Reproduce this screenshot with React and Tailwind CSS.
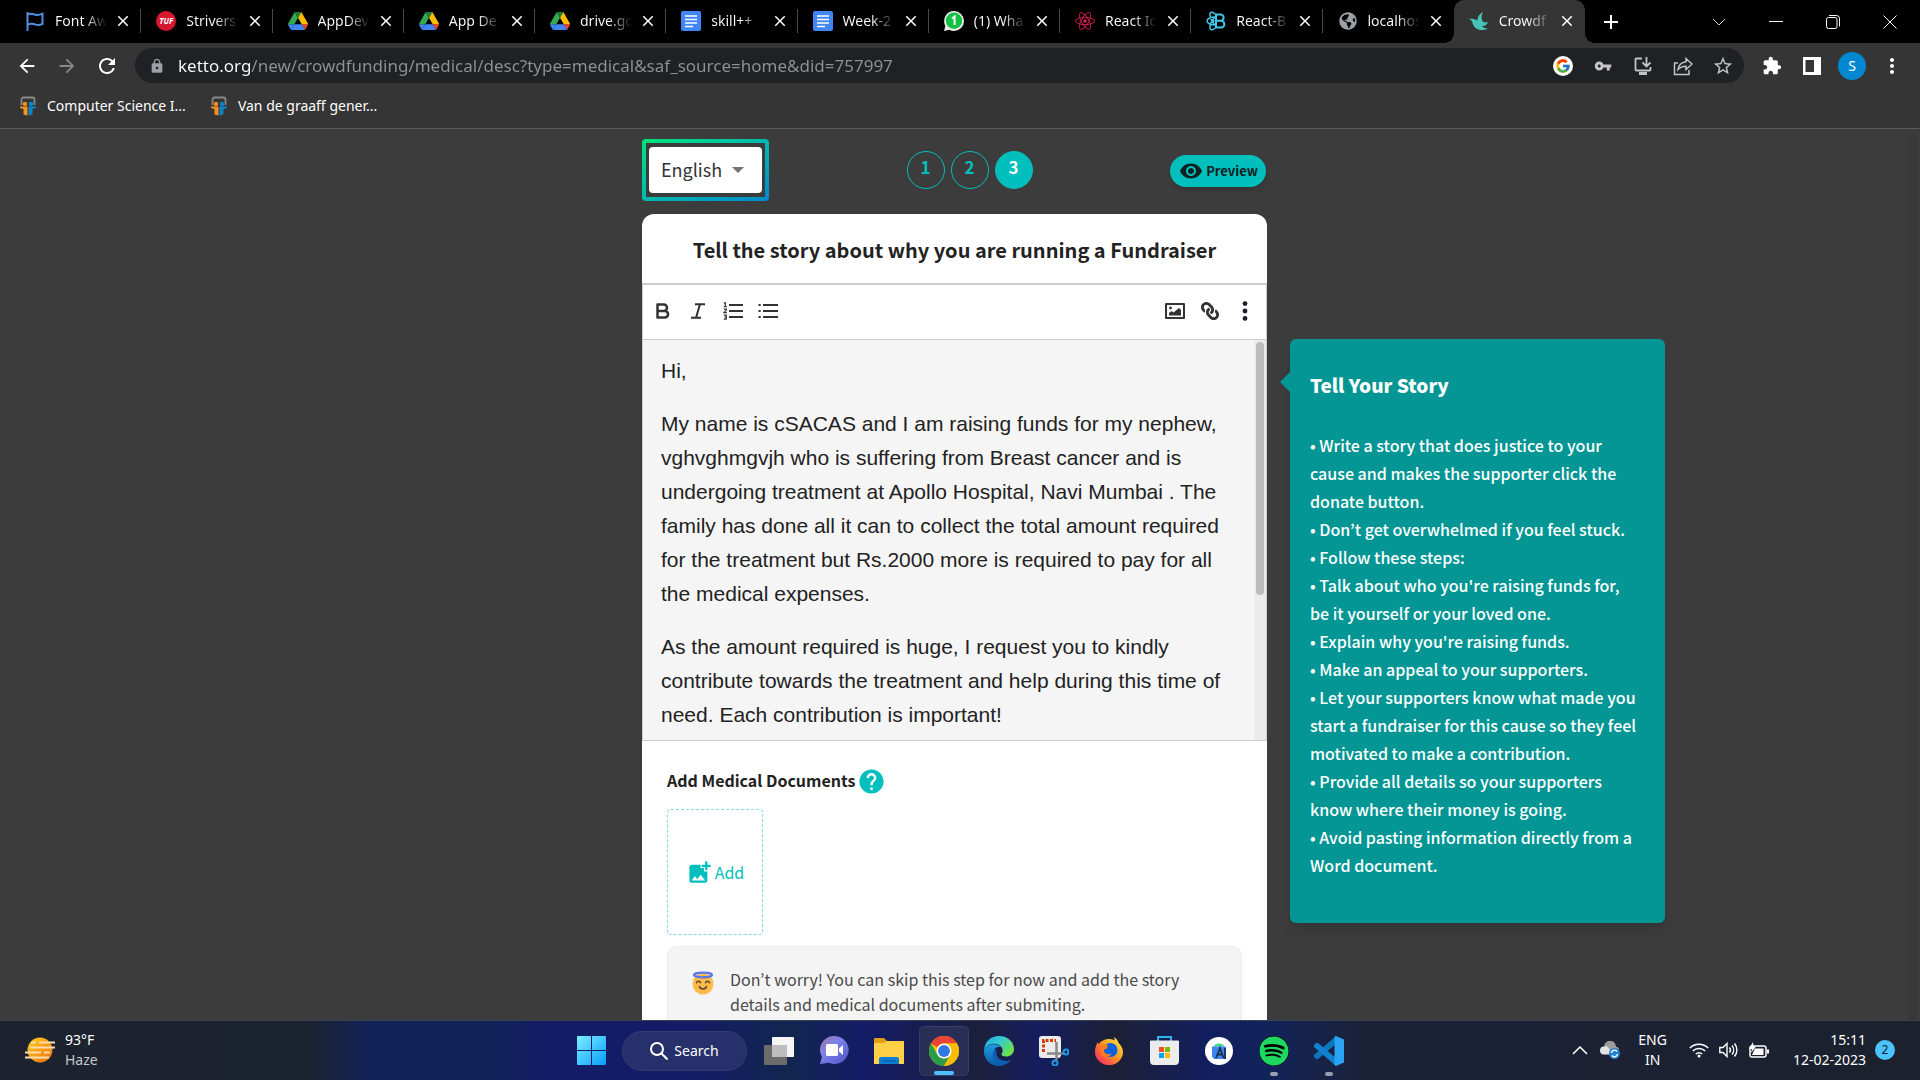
import React from "react";
import {
  MdArrowBack, MdArrowForward, MdRefresh, MdLock, MdVpnKey, MdStarBorder, MdExtension,
  MdMoreVert, MdClose, MdAdd, MdHelp, MdAddPhotoAlternate, MdVisibility,
} from "react-icons/md";
import { FcGoogle } from "react-icons/fc";
import { FaReact, FaSpotify, FaLink, FaGlobeAmericas } from "react-icons/fa";

const ui = "font-['Noto_Sans','Open_Sans',sans-serif]";
const site = "font-['Noto_Sans_CJK_KR','Noto_Sans',sans-serif]";

/* ---------- favicons ---------- */

const FlagIcon = () => (
  <svg viewBox="0 0 20 20" className="size-5" fill="none" stroke="#4f8fe0" strokeWidth="2">
    <path d="M2.500 1v19" />
    <path d="M2.500 3.500c3-1.300 5-.8 7 0s4.500.8 8-.8V13c-3 1.300-5.500 1.300-7.500.4s-4.500-1-7.500.3" />
  </svg>
);
const TufIcon = () => (
  <span className="flex size-5 items-center justify-center rounded-full bg-[#d5182f] text-[8px] font-bold italic text-white">TUF</span>
);
const DriveIcon = () => (
  <svg viewBox="0 0 87 78" className="h-[18px] w-5">
    <path d="m6.600 66.850 3.850 6.650c.8 1.400 1.950 2.500 3.300 3.300l13.750-23.800h-27.500c0 1.550.4 3.100 1.200 4.500z" fill="#4285f4" />
    <path d="m43.650 25-13.750-23.800c-1.350.8-2.500 1.900-3.300 3.300l-25.400 44a9 9 0 0 0-1.200 4.500h27.500z" fill="#34a853" />
    <path d="m73.550 76.800c1.350-.8 2.500-1.900 3.300-3.300l1.600-2.750 7.650-13.250c.8-1.400 1.200-2.950 1.200-4.500h-27.500l5.850 11.500z" fill="#ea4335" />
    <path d="m43.650 25 13.750-23.800c-1.350-.8-2.900-1.200-4.500-1.200h-18.500c-1.600 0-3.150.45-4.500 1.200z" fill="#188038" />
    <path d="m59.800 53h-32.300l-13.750 23.800c1.350.8 2.900 1.200 4.500 1.200h50.800c1.600 0 3.150-.45 4.500-1.200z" fill="#4285f4" />
    <path d="m73.400 26.500-12.700-22c-.8-1.400-1.950-2.500-3.300-3.300l-13.750 23.800 16.150 28h27.450c0-1.550-.4-3.100-1.200-4.500z" fill="#fbbc04" />
  </svg>
);
const DocsIcon = () => (
  <svg viewBox="0 0 20 20" className="size-5">
    <rect width="20" height="20" rx="2" fill="#4285f4" />
    <path d="M4 5h12M4 8.500h12M4 12h12M4 15.500h8" stroke="#fff" strokeWidth="1.700" />
  </svg>
);
const WhatsIcon = () => (
  <svg viewBox="0 0 20 20" className="size-5">
    <path d="M10 0a10 10 0 0 1 0 20 10 10 0 0 1-4.600-1.200L0 20l1.400-5.100A10 10 0 0 1 10 0z" fill="#eee" />
    <circle cx="10" cy="9.800" r="8.200" fill="#12c143" />
    <path d="M8 7.500 10.600 5.500V14" fill="none" stroke="#fff" strokeWidth="2" />
  </svg>
);
const GlobeIcon = () => <FaGlobeAmericas className="size-[18px] text-[#9aa0a6]" />;
const BirdIcon = () => (
  <svg viewBox="0 0 20 20" className="size-5" fill="#45c4b5">
    <path d="M14 1C9 4 8.500 7 8.600 9.500 5 7.800 3 7.600 0 8c2.500 1 3 2 3.600 4 .9 4 4.400 7 8.400 7 3 0 5-.6 7-1.600-3 .2-5-.6-6-2.400 3 .3 5-1.500 6.300-4-2.300.6-4 .5-5.300-.2C12 8 12.200 4 14 1z" />
  </svg>
);
const ReactBootstrapIcon = () => (
  <svg viewBox="0 0 20 20" className="size-5" fill="none" stroke="#41c7e8" strokeWidth="1.500">
    <path d="M10 3.500h4.500a3 3 0 0 1 0 6.300h-4.500zM10 9.800h5a3.300 3.300 0 0 1 0 6.700h-5z" strokeWidth="2" />
    <path d="M9 6C4 6 1 8 1 10s3 4 8 4M9 3C6 0 3.500 1 4 4.500S7 12 9 14M9 17c-3 3-5.500 2-5-1.500S7 8 9 6" />
    <circle cx="7" cy="10" r="1.500" fill="#41c7e8" stroke="none" />
  </svg>
);

const tabs = [
  { t: "Font Aw", i: <FlagIcon /> },
  { t: "Strivers", i: <TufIcon /> },
  { t: "AppDev", i: <DriveIcon /> },
  { t: "App De", i: <DriveIcon /> },
  { t: "drive.go", i: <DriveIcon /> },
  { t: "skill++", i: <DocsIcon /> },
  { t: "Week-2", i: <DocsIcon /> },
  { t: "(1) Wha", i: <WhatsIcon /> },
  { t: "React Ic", i: <FaReact className="size-5 text-[#d81b52]" /> },
  { t: "React-B", i: <ReactBootstrapIcon /> },
  { t: "localhos", i: <GlobeIcon /> },
  { t: "Crowdf", i: <BirdIcon />, active: true },
];

function Tab({ tab, divider }) {
  return (
    <div
      className={
        "relative flex h-full min-w-0 flex-1 items-center pl-[15px] pr-2 pb-px " +
        (tab.active ? "rounded-t-[10px] bg-[#353535]" : "")
      }
    >
      {tab.active && (
        <>
          <span className="absolute bottom-0 -left-2.5 size-2.5 bg-[radial-gradient(circle_at_0_0,transparent_10px,#353535_10px)]" />
          <span className="absolute bottom-0 -right-2.5 size-2.5 bg-[radial-gradient(circle_at_100%_0,transparent_10px,#353535_10px)]" />
        </>
      )}
      <button className="flex min-w-0 flex-1 items-center gap-2.5">
        <span className="flex w-5 shrink-0 justify-center">{tab.i}</span>
        <span className="min-w-0 flex-1 whitespace-nowrap bg-linear-to-r from-white from-55% to-transparent bg-clip-text text-left text-sm text-transparent">
          {tab.t}
        </span>
      </button>
      <button aria-label={"Close " + tab.t} className="ml-1.5 flex size-5 items-center justify-center text-white">
        <MdClose className="size-[18px]" />
      </button>
      {divider && <span className="absolute right-0 h-6 w-px bg-[#4a4a4a]" />}
    </div>
  );
}

function TabStrip() {
  return (
    <div className="flex h-[43px] shrink-0 items-center bg-black pl-2.5 text-white">
      <div className="flex h-full max-w-[1575px] flex-1">
        {tabs.map((t, i) => (
          <Tab key={i} tab={t} divider={i < 10} />
        ))}
      </div>
      <button aria-label="New tab" className="ml-3 flex size-7 items-center justify-center">
        <MdAdd className="size-6" />
      </button>
      <div className="ml-auto flex h-9 pr-0.5">
        <button aria-label="Search tabs" className="flex w-[57px] items-center justify-center">
          <svg viewBox="0 0 14 14" className="size-3.5" fill="none" stroke="#ccc"><path d="m1 4 6 6 6-6" /></svg>
        </button>
        <button aria-label="Minimize" className="flex w-[57px] items-center justify-center">
          <span className="h-px w-3.5 bg-white" />
        </button>
        <button aria-label="Restore" className="flex w-[57px] items-center justify-center">
          <svg viewBox="0 0 14 14" className="size-3.5" fill="none" stroke="#fff">
            <rect x=".5" y="2.500" width="10.500" height="11" rx="2" /><path d="M3 .5h7.500a3 3 0 0 1 3 3v8" />
          </svg>
        </button>
        <button aria-label="Close window" className="flex w-[57px] items-center justify-center">
          <svg viewBox="0 0 14 14" className="size-3.5" stroke="#fff"><path d="m.5.5 13 13M13.500.5l-13 13" /></svg>
        </button>
      </div>
    </div>
  );
}

const iconBtn = "flex h-8 w-10 shrink-0 items-center justify-center";

function Toolbar() {
  return (
    <div className="flex h-[45px] items-center pl-[7px] pr-2 text-white">
      <button aria-label="Back" className={iconBtn}><MdArrowBack className="size-[22px]" /></button>
      <button aria-label="Forward" className={iconBtn}><MdArrowForward className="size-[22px] text-[#868686]" /></button>
      <button aria-label="Reload" className={iconBtn}><MdRefresh className="size-6" /></button>
      <div className="ml-2 flex h-[35px] flex-1 items-center rounded-full bg-[#202124] pr-px text-[#c4c4c4]">
        <span className="flex w-[43px] justify-center"><MdLock className="size-4 text-[#9aa0a6]" /></span>
        <input
          aria-label="Address"
          defaultValue="ketto.org/new/crowdfunding/medical/desc?type=medical&saf_source=home&did=757997"
          className="min-w-0 flex-1 bg-[linear-gradient(90deg,#fff_73px,#8f9195_73px)] bg-clip-text text-[17px] text-transparent outline-none"
        />
        <button aria-label="Google" className={iconBtn}>
          <span className="flex size-5 items-center justify-center rounded-full bg-white"><FcGoogle className="size-4" /></span>
        </button>
        <button aria-label="Passwords" className={iconBtn}><MdVpnKey className="size-[18px]" /></button>
        <button aria-label="Install app" className={iconBtn}>
          <svg viewBox="0 0 20 20" className="size-5" fill="none" stroke="currentColor" strokeWidth="1.800">
            <path d="M9 2.500H3.500a1 1 0 0 0-1 1v10a1 1 0 0 0 1 1h13a1 1 0 0 0 1-1V11M13.500 1v9M9.500 6.500l4 4 4-4" /><path d="M6 17.500h8" strokeWidth="3" />
          </svg>
        </button>
        <button aria-label="Share" className={iconBtn}>
          <svg viewBox="0 0 20 20" className="size-5" fill="none" stroke="currentColor" strokeWidth="1.500">
            <path d="M5 7H1.500v11.500H16V14" /><path d="M13 2.500 19 8l-6 5.500v-3.300c-3.500 0-6 1-8 3.300.5-4.500 3.500-7.200 8-7.800z" />
          </svg>
        </button>
        <button aria-label="Bookmark" className={iconBtn}><MdStarBorder className="size-[22px]" /></button>
      </div>
      <div className="ml-2 flex">
        <button aria-label="Extensions" className={iconBtn}><MdExtension className="size-5" /></button>
        <button aria-label="Side panel" className={iconBtn}>
          <svg viewBox="0 0 18 18" className="size-[18px]"><path fill="#fff" fillRule="evenodd" d="M0 0h18v18H0zM2.500 3v12H11V3z" /></svg>
        </button>
        <button aria-label="Profile" className={iconBtn}>
          <span className="flex size-7 items-center justify-center rounded-full bg-[#0288d1] text-sm">S</span>
        </button>
        <button aria-label="Menu" className={iconBtn}><MdMoreVert className="size-6" /></button>
      </div>
    </div>
  );
}

const SlideIcon = () => (
  <svg viewBox="0 0 18 20" className="h-5 w-[18px] shrink-0">
    <path d="M2.500 9V3.500a2 2 0 0 1 2-2h9a2 2 0 0 1 2 2V9" fill="none" stroke="#8a8a8a" strokeWidth="1.800" />
    <circle cx="6" cy="8" r="2.300" fill="#f28b1d" /><circle cx="12" cy="8" r="2.300" fill="#0b84c8" />
    <path d="M1 10.500h7.500V19.500l-4-1V13L1 12z" fill="#f5921e" /><path d="M17 10.500H9.500V19.500l4-1V13l3.500-1z" fill="#0b84c8" />
  </svg>
);

function Bookmarks() {
  return (
    <div className="flex h-10 items-center gap-6 pl-[19px] pb-1 text-sm text-white">
      {["Computer Science I...", "Van de graaff gener..."].map((b) => (
        <a key={b} href="#" className="flex items-center gap-2.5"><SlideIcon />{b}</a>
      ))}
    </div>
  );
}

/* ---------- fundraiser page ---------- */

function Steps() {
  const base = "flex size-[38px] items-center justify-center rounded-full border border-[#01bfbd] pb-1.5 text-[17px] font-bold ";
  return (
    <div className="flex gap-1.5">
      <button className={base + "text-[#01bfbd]"}>1</button>
      <button className={base + "text-[#01bfbd]"}>2</button>
      <button className={base + "bg-[#01bfbd] text-white"}>3</button>
    </div>
  );
}

const BoldIcon = () => (
  <svg viewBox="0 0 14 16" className="h-4 w-3.5" fill="none" stroke="#333" strokeWidth="2.500" strokeLinejoin="round">
    <path d="M1.500 1.500h6.300a3.200 3.200 0 0 1 0 6.400H1.500zM1.500 7.900h7.300a3.300 3.300 0 0 1 0 6.600H1.500z" />
  </svg>
);
const ItalicIcon = () => (
  <svg viewBox="0 0 14 16" className="h-4 w-3.5" fill="none" stroke="#333" strokeWidth="2">
    <path d="M4 1.200h10M0 14.800h10M9 1.200 5 14.800" />
  </svg>
);
const OrderedIcon = () => (
  <svg viewBox="0 0 20 18" className="h-[18px] w-5" fill="none" stroke="#333">
    <path d="M6 3h14M6 9h14M6 15h14" strokeWidth="2.200" />
    <path d="M.8 1.200 2.300.6v4M.8 4.600h3M.8 7.200h2.600v.9L.8 10.700h3M.8 13.200h2.500v3.900H.8M1.500 15.100h1.800" strokeWidth="1.200" />
  </svg>
);
const BulletIcon = () => (
  <svg viewBox="0 0 20 18" className="h-[18px] w-5" fill="none" stroke="#333" strokeWidth="2.200">
    <path d="M5 3h15M5 9h15M5 15h15M.5 3h2.200M.5 9h2.200M.5 15h2.200" />
  </svg>
);
const ImageIcon = () => (
  <svg viewBox="0 0 20 16" className="h-4 w-5">
    <path fill="#333" fillRule="evenodd" d="M1 0h18a1 1 0 0 1 1 1v14a1 1 0 0 1-1 1H1a1 1 0 0 1-1-1V1a1 1 0 0 1 1-1zm1 2v12h16V2z" />
    <path fill="#333" d="M4 12.500V10l2.500-2 2 1.500L14 5l2 2v5.500z" /><circle cx="5.500" cy="5" r="1.400" fill="#333" />
  </svg>
);

const tool = "flex h-8 w-[35px] items-center justify-center";

function Editor() {
  return (
    <div className="border-x border-b border-[#ccc]">
      <div className="flex h-[57px] items-center border-t-2 border-b border-[#ccc] pb-[3px] pl-0.5 pr-1">
        <button aria-label="Bold" className={tool}><BoldIcon /></button>
        <button aria-label="Italic" className={tool}><ItalicIcon /></button>
        <button aria-label="Ordered list" className={tool}><OrderedIcon /></button>
        <button aria-label="Bullet list" className={tool}><BulletIcon /></button>
        <span className="flex-1" />
        <button aria-label="Insert image" className={tool}><ImageIcon /></button>
        <button aria-label="Insert link" className={tool}><FaLink className="size-[18px] -scale-x-100 text-[#333]" /></button>
        <button aria-label="More" className={tool}>
          <svg viewBox="0 0 6 20" className="h-5 w-1.5" fill="#1c1c2c"><circle cx="3" cy="2.600" r="2.400" /><circle cx="3" cy="10" r="2.400" /><circle cx="3" cy="17.400" r="2.400" /></svg>
        </button>
      </div>
      <div className="flex h-[400px] bg-[#f5f5f5]">
        <div
          role="textbox" aria-label="Story" aria-multiline="true"
          className="flex flex-1 flex-col gap-[19px] overflow-hidden whitespace-nowrap pl-[18px] pt-3.5 font-['Liberation_Sans',Arial,sans-serif] text-[21px] leading-[34px] text-[#222]"
        >
          <p>Hi,</p>
          <p>
            My name is cSACAS and I am raising funds for my nephew,<br />
            vghvghmgvjh who is suffering from Breast cancer and is<br />
            undergoing treatment at Apollo Hospital, Navi Mumbai . The<br />
            family has done all it can to collect the total amount required<br />
            for the treatment but Rs.2000 more is required to pay for all<br />
            the medical expenses.
          </p>
          <p>
            As the amount required is huge, I request you to kindly<br />
            contribute towards the treatment and help during this time of<br />
            need. Each contribution is important!
          </p>
        </div>
        <div className="flex w-3 justify-center bg-[#ebebeb] pt-0.5">
          <span className="h-[253px] w-2 rounded-full bg-[#bcbcbc]" />
        </div>
      </div>
    </div>
  );
}

const AngelIcon = () => (
  <svg viewBox="0 0 22 24" className="mt-1 h-6 w-[22px] shrink-0">
    <circle cx="11" cy="13" r="10.500" fill="#fdbb4b" />
    <ellipse cx="11" cy="4" rx="9" ry="2.300" fill="none" stroke="#5a76e0" strokeWidth="2.200" />
    <path d="M4.500 11.800c.8-2 3.200-2 4 0M13.500 11.800c.8-2 3.200-2 4 0M7.500 15.500c.6 3.200 6.400 3.200 7 0" fill="none" stroke="#5f4631" strokeWidth="1.500" strokeLinecap="round" />
  </svg>
);

const tips = [
  ["Write a story that does justice to your", "cause and makes the supporter click the", "donate button."],
  ["Don’t get overwhelmed if you feel stuck."],
  ["Follow these steps:"],
  ["Talk about who you're raising funds for,", "be it yourself or your loved one."],
  ["Explain why you're raising funds."],
  ["Make an appeal to your supporters."],
  ["Let your supporters know what made you", "start a fundraiser for this cause so they feel", "motivated to make a contribution."],
  ["Provide all details so your supporters", "know where their money is going."],
  ["Avoid pasting information directly from a", "Word document."],
];

function Fundraiser() {
  return (
    <main className={"grid min-h-0 flex-1 grid-cols-[1fr_625px_1fr_11px] overflow-hidden bg-[#3c3c3c] " + site}>
      <span />
      <div className="flex flex-col pt-2.5">
        <header className="flex items-center justify-between">
          <div className="h-[62px] w-[127px] rounded-[4px] bg-linear-to-br from-[#00e676] to-[#0288d1] p-1">
            <div className="h-full bg-[#3c3c3c] px-[3px] py-1">
              <div className="relative h-full">
                <select aria-label="Language" className="h-full w-full appearance-none rounded-[4px] bg-white pb-0.5 pl-3 text-[18px] text-[#333] outline-none">
                  <option>English</option>
                </select>
                <span className="pointer-events-none absolute top-5 right-[18px] border-x-6 border-t-6 border-x-transparent border-t-[#757575]" />
              </div>
            </div>
          </div>
          <Steps />
          <button className="mt-0.5 mr-px flex h-8 items-center gap-[3px] rounded-full bg-[#01bfbd] px-2 pl-[9px] text-[13px] font-bold text-[#10201f] shadow-md">
            <MdVisibility className="size-6" />Preview
          </button>
        </header>
        <section className="mt-[13px] rounded-t-[12px] bg-white">
          <h1 className="flex h-[69px] items-center justify-center pt-0.5 text-[20px] font-bold text-[#222]">
            Tell the story about why you are running a Fundraiser
          </h1>
          <Editor />
          <div className="flex flex-col px-[25px] pt-[26px]">
            <div className="flex h-7 items-center gap-0.5 text-[16px] font-bold text-[#222]">
              <span className="pb-0.5">Add Medical Documents</span>
              <button aria-label="Help"><MdHelp className="size-[29px] text-[#01bfbd]" /></button>
            </div>
            <button className="mt-3.5 flex h-[126px] w-24 items-center justify-center gap-0.5 rounded-[4px] border border-dashed border-[#7adedc] text-[16px] text-[#01bfbd]">
              <MdAddPhotoAlternate className="size-[27px]" />Add
            </button>
            <div className="mt-[11px] flex h-[140px] gap-4 rounded-[10px] border border-[#ececec] bg-[#f4f4f4] px-6 pt-5 text-[16px] leading-[25px] text-[#4a4a4a]">
              <AngelIcon />
              <p className="whitespace-nowrap">
                Don’t worry! You can skip this step for now and add the story<br />
                details and medical documents after submiting.
              </p>
            </div>
          </div>
        </section>
      </div>
      <aside className="relative mt-[210px] ml-[23px] h-[584px] w-[375px] rounded-[6px] bg-[#049694] px-5 pt-8 text-white shadow-lg">
        <span className="absolute top-[33px] -left-2.5 border-y-10 border-r-10 border-y-transparent border-r-[#049694]" />
        <h2 className="text-[19px] leading-7 font-black">Tell Your Story</h2>
        <ul className="mt-8 text-[16px] leading-7 font-medium whitespace-nowrap">
          {tips.map((lines, i) => (
            <li key={i}>
              {lines.map((l, j) => (
                <span key={j} className="block">{j === 0 ? "• " + l : l}</span>
              ))}
            </li>
          ))}
        </ul>
      </aside>
      <span className="mt-1 w-2 rounded-t-full bg-[#383838]" />
    </main>
  );
}

/* ---------- taskbar ---------- */

const WindowsIcon = () => (
  <svg viewBox="0 0 29 29" className="size-[29px]">
    <defs><linearGradient id="win" x1="0" y1="0" x2="1" y2="1"><stop stopColor="#7af0ff" /><stop offset="1" stopColor="#0a9bff" /></linearGradient></defs>
    <path fill="url(#win)" d="M1 0h13v14H0V1a1 1 0 0 1 1-1zm14 0h13a1 1 0 0 1 1 1v13H15zM0 15h14v14H1a1 1 0 0 1-1-1zm15 0h14v13a1 1 0 0 1-1 1H15z" />
  </svg>
);
const TaskViewIcon = () => (
  <svg viewBox="0 0 30 28" className="h-7 w-[30px]">
    <rect x="8" width="22" height="20" rx="1" fill="#f5f5f5" />
    <rect y="8" width="23" height="20" rx="1" fill="#6b6b6b" />
    <path d="M8 8h15v12H8z" fill="#bdbdbd" />
  </svg>
);
const ChatIcon = () => (
  <svg viewBox="0 0 29 29" className="size-[29px]">
    <defs><linearGradient id="chat" x1="0" y1="0" x2="1" y2="1"><stop stopColor="#a76f9f" /><stop offset=".4" stopColor="#7b83eb" /><stop offset="1" stopColor="#4f52c4" /></linearGradient></defs>
    <path d="M15 0a14 14 0 1 1-6 26.800L0 28l2-7A14 14 0 0 1 15 0z" fill="url(#chat)" />
    <rect x="6" y="8" width="12" height="12" rx="1.500" fill="#fff" /><path d="M19 12.500 23 9v10l-4-3.500z" fill="#fff" />
  </svg>
);
const FolderIcon = () => (
  <svg viewBox="0 0 30 28" className="h-7 w-[30px]">
    <path d="M1 1h9l3 3h16a1 1 0 0 1 1 1v8H0V2a1 1 0 0 1 1-1z" fill="#e29d0b" />
    <path d="M0 6h10l3-2h16a1 1 0 0 1 1 1v22H0z" fill="#ffcf48" />
    <path d="M5 27v-5a2 2 0 0 1 2-2h16a2 2 0 0 1 2 2v5z" fill="#0f7fd6" /><path d="M8 24h14" stroke="#0a4f96" />
  </svg>
);
const ChromeIcon = () => (
  <svg viewBox="0 0 48 48" className="size-[30px]">
    <circle cx="24" cy="24" r="24" fill="#fbbc04" />
    <path d="M3.200 12A24 24 0 0 1 44.800 12H24a12 12 0 0 0-10.400 6z" fill="#ea4335" />
    <path d="M3.200 12A24 24 0 0 0 24 48l10.400-18a12 12 0 0 1-20.800 0z" fill="#2a9d4a" />
    <path d="M44.800 12H24v6l10.400 12L24 48A24 24 0 0 0 44.800 12z" fill="#fbbc04" />
    <circle cx="24" cy="24" r="12" fill="#fff" /><circle cx="24" cy="24" r="9.500" fill="#2f78e6" />
  </svg>
);
const EdgeIcon = () => (
  <svg viewBox="0 0 30 30" className="size-[30px]">
    <defs>
      <linearGradient id="e1" x1="0" y1="0" x2="1" y2=".6"><stop stopColor="#1fa8e8" /><stop offset=".5" stopColor="#35c9d0" /><stop offset="1" stopColor="#6be04a" /></linearGradient>
      <linearGradient id="e2" x1="0" y1="0" x2="0" y2="1"><stop stopColor="#1b9de2" /><stop offset="1" stopColor="#0c59a4" /></linearGradient>
    </defs>
    <path d="M0 15a15 15 0 0 0 15 15c5 0 9-2.500 12-6-7 3-16-1-14.500-9C11 10 2 8 0 15z" fill="#0e5fb0" />
    <path d="M0 14C1 5 7 0 15 0c9 0 15 6 15 13 0 5-4 7.500-8 7.500-3 0-5-1-4.500-2.500 1.500-2 1.500-4 .5-6C15 6 4 6 0 14z" fill="url(#e1)" />
    <path d="M0 14c3-6 12-8 17-3-5-1-8 3-8 7 0 6 4 10 9 11.700C8 31.500-.5 24 0 14z" fill="url(#e2)" />
  </svg>
);
const SnipIcon = () => (
  <svg viewBox="0 0 30 30" className="size-[30px]">
    <rect width="22" height="22" rx="3" fill="#ececec" />
    <path d="M4.500 16V4.500H17" fill="none" stroke="#d83b01" strokeWidth="3" strokeDasharray="3 1.500" />
    <path d="M17.500 6v18M8 17.500h17" stroke="#888" strokeWidth="2.500" />
    <circle cx="27" cy="16" r="2.500" fill="none" stroke="#1d9be0" strokeWidth="2" /><circle cx="16" cy="27" r="2.500" fill="none" stroke="#1d9be0" strokeWidth="2" />
  </svg>
);
const FirefoxIcon = () => (
  <svg viewBox="0 0 28 28" className="size-7">
    <defs><linearGradient id="ff" x1="1" y1="0" x2="0" y2="1"><stop stopColor="#fff04a" /><stop offset=".45" stopColor="#ff9a1f" /><stop offset="1" stopColor="#f5156c" /></linearGradient></defs>
    <circle cx="14" cy="15" r="13" fill="url(#ff)" />
    <path d="M19 0c3 2 4 4 4.500 6 3 3 4.500 6 4.500 9a14 13 0 0 1-28 0C0 10 1.500 7 3 5l.5 3L7 4l1 3.500L13 8h6c1-2 1-5 0-8z" fill="url(#ff)" />
    <circle cx="15.500" cy="13" r="7" fill="#0a62dc" />
    <path d="M7 7.500 13 8l-1 3.500-3.500 1.500c1 4 5 5 8 3.500-1 3-5 4-8 3-4-2-4-8-1.500-12z" fill="#ff7a1f" />
  </svg>
);
const StoreIcon = () => (
  <svg viewBox="0 0 29 29" className="size-[29px]">
    <path d="M8 6V1h13v5" fill="none" stroke="#2fb6f2" strokeWidth="2" />
    <path d="M1 4.500h27a1 1 0 0 1 1 1V25a4 4 0 0 1-4 4H4a4 4 0 0 1-4-4V5.500a1 1 0 0 1 1-1z" fill="#ececec" />
    <path d="M9 11h5v5H9z" fill="#f25022" /><path d="M15 11h5v5h-5z" fill="#7fba00" /><path d="M9 17h5v5H9z" fill="#00a4ef" /><path d="M15 17h5v5h-5z" fill="#ffb900" />
  </svg>
);
const StudioIcon = () => (
  <svg viewBox="0 0 28 28" className="size-7">
    <circle cx="14" cy="14" r="14" fill="#fff" />
    <path d="M8.500 9.500a6 5 0 0 1 11 0z" fill="#3ddc84" /><path d="M7 9.500h14V22H9l-2-2.500z" fill="#4285f4" />
    <path d="m11 21 4-10 3.500 10M12.500 17.500h5M20 11v11" fill="none" stroke="#17324d" strokeWidth="1.800" />
  </svg>
);
const CodeIcon = () => (
  <svg viewBox="0 0 30 30" className="size-[30px]">
    <path d="M22 0v8L4 23l-1.500.3L0 21v-2z" fill="#0a76bd" /><path d="M22 30v-8L4 7l-1.500-.3L0 9v2z" fill="#1083cf" />
    <path d="M22 0 30 3.500v23L22 30c-.9-.3-1.500-.9-1.500-1.800V1.800C20.500.9 21 .3 22 0z" fill="#29a3f2" />
  </svg>
);

const apps = [
  { n: "Task view", i: <TaskViewIcon /> },
  { n: "Chat", i: <ChatIcon /> },
  { n: "File Explorer", i: <FolderIcon /> },
  { n: "Chrome", i: <ChromeIcon />, on: true },
  { n: "Edge", i: <EdgeIcon /> },
  { n: "Snipping Tool", i: <SnipIcon /> },
  { n: "Firefox", i: <FirefoxIcon /> },
  { n: "Store", i: <StoreIcon /> },
  { n: "Android Studio", i: <StudioIcon /> },
  { n: "Spotify", i: <FaSpotify className="size-[30px] rounded-full bg-black text-[#1ed760]" />, run: true },
  { n: "Code", i: <CodeIcon />, run: true },
];

function Taskbar() {
  return (
    <footer className="grid h-[60px] shrink-0 grid-cols-[1fr_auto_1fr] items-center border-t border-[#3a4152] bg-[linear-gradient(90deg,#1d222e_0%,#1b2330_16%,#12235a_19.500%,#12235a_26%,#131c66_28.500%,#131c66_36%,#12264f_41%,#131c66_45%,#1b1f3c_51%,#151d5e_54%,#1c2035_58%,#121f60_63%,#12235a_66%,#1b2238_71%,#1c212d_100%)] text-sm text-white">
      <button className="flex items-center gap-2.5 justify-self-start pb-0.5 pl-[25px] text-left leading-5">
        <svg viewBox="0 0 30 26" className="h-[26px] w-[30px]">
          <defs><linearGradient id="sun" x1="0" y1="0" x2="1" y2="1"><stop stopColor="#ffd21a" /><stop offset="1" stopColor="#f26a0d" /></linearGradient></defs>
          <circle cx="15" cy="13" r="12.500" fill="url(#sun)" />
          <path d="M6 5.500h5M14 5.500h16M5 10.500h25M0 15.500h16M19 15.500h6M0 20.500h24" stroke="#f6ddb0" strokeWidth="2" />
        </svg>
        <span><span className="block">93°F</span><span className="block text-[#c8c8c8]">Haze</span></span>
      </button>
      <div className="flex h-full items-center">
        <button aria-label="Start" className="flex w-[50px] justify-center"><WindowsIcon /></button>
        <button className="mr-[7px] ml-1.5 flex h-10 w-[125px] items-center justify-center gap-1.5 rounded-full border border-[#333d70] bg-[#26306a]">
          <svg viewBox="0 0 18 18" className="size-[18px]" fill="none" stroke="#fff" strokeWidth="2"><circle cx="7" cy="7" r="6" /><path d="m11.500 11.500 6 6" /></svg>
          Search
        </button>
        <div className="flex gap-[5px]">
          {apps.map((a) => (
            <button
              key={a.n}
              aria-label={a.n}
              className={"relative flex size-[50px] items-center justify-center rounded-[5px] " + (a.on ? "border border-[#363c62] bg-[#282e55]" : "")}
            >
              {a.i}
              {a.on && <span className="absolute bottom-0 h-1 w-5 rounded-full bg-[#4cc2ff]" />}
              {a.run && <span className="absolute bottom-0 h-1 w-2 rounded-full bg-[#9a9fb0]" />}
            </button>
          ))}
        </div>
      </div>
      <div className="flex items-center justify-self-end pr-[25px] pb-px">
        <button aria-label="Hidden icons">
          <svg viewBox="0 0 16 9" className="h-[9px] w-4" fill="none" stroke="#fff" strokeWidth="1.500"><path d="m1 8 7-7 7 7" /></svg>
        </button>
        <svg viewBox="0 0 20 18" className="ml-3 h-[18px] w-5">
          <path d="M4 13.500a4 4 0 0 1 0-7.500A6 6 0 0 1 16 5.500a4 4 0 0 1 3 4z" fill="#9c9c9c" /><path d="M4 13.500a4 4 0 0 1 0-8c3-1 5 1 6 4l4 4z" fill="#e4e4e4" />
          <circle cx="14.500" cy="12.500" r="5.500" fill="#1f7fd0" /><path d="M11.500 12a3 3 0 0 1 5.500-1.500M17.500 13a3 3 0 0 1-5.500 1.500" fill="none" stroke="#fff" strokeWidth="1.400" />
        </svg>
        <button className="ml-[18px] leading-5">ENG<br />IN</button>
        <button aria-label="Network, volume and battery" className="ml-[22px] flex items-center gap-2.5">
          <svg viewBox="0 0 20 16" className="h-4 w-5" fill="none" stroke="#fff" strokeWidth="1.500">
            <path d="M.8 6a13 13 0 0 1 18.400 0M3.800 9a9 9 0 0 1 12.400 0M6.800 12a5 5 0 0 1 6.400 0" /><circle cx="10" cy="14" r="1.500" fill="#fff" stroke="none" />
          </svg>
          <svg viewBox="0 0 20 16" className="h-4 w-5" fill="none" stroke="#fff" strokeWidth="1.400">
            <path d="M.8 5.500H4L8 1.500v13l-4-4H.8z" /><path d="M10.500 5.500a4 4 0 0 1 0 5M13 3.500a7 7 0 0 1 0 9M15.500 1.500a10 10 0 0 1 0 13" />
          </svg>
          <svg viewBox="0 0 20 17" className="h-[17px] w-5">
            <rect x="1" y="4" width="16" height="11" rx="2" fill="none" stroke="#fff" strokeWidth="1.500" /><path d="M3 13 6 6.500h8.500V13z" fill="#fff" /><path d="M18 7.500h2v4h-2zM4 0 0 7h3l-1 4 5-6.500H4.500z" fill="#fff" />
          </svg>
        </button>
        <button className="ml-6 text-right leading-5">15:11<br />12-02-2023</button>
        <span className="ml-[9px] flex size-5 items-center justify-center rounded-full bg-[#4cc2ff] text-xs text-[#123]">2</span>
      </div>
    </footer>
  );
}

export default function App() {
  return (
    <div className={"flex h-screen flex-col overflow-hidden " + ui}>
      <TabStrip />
      <div className="shrink-0 border-b border-[#5a5a5a] bg-[#353535]">
        <Toolbar />
        <Bookmarks />
      </div>
      <Fundraiser />
      <Taskbar />
    </div>
  );
}
